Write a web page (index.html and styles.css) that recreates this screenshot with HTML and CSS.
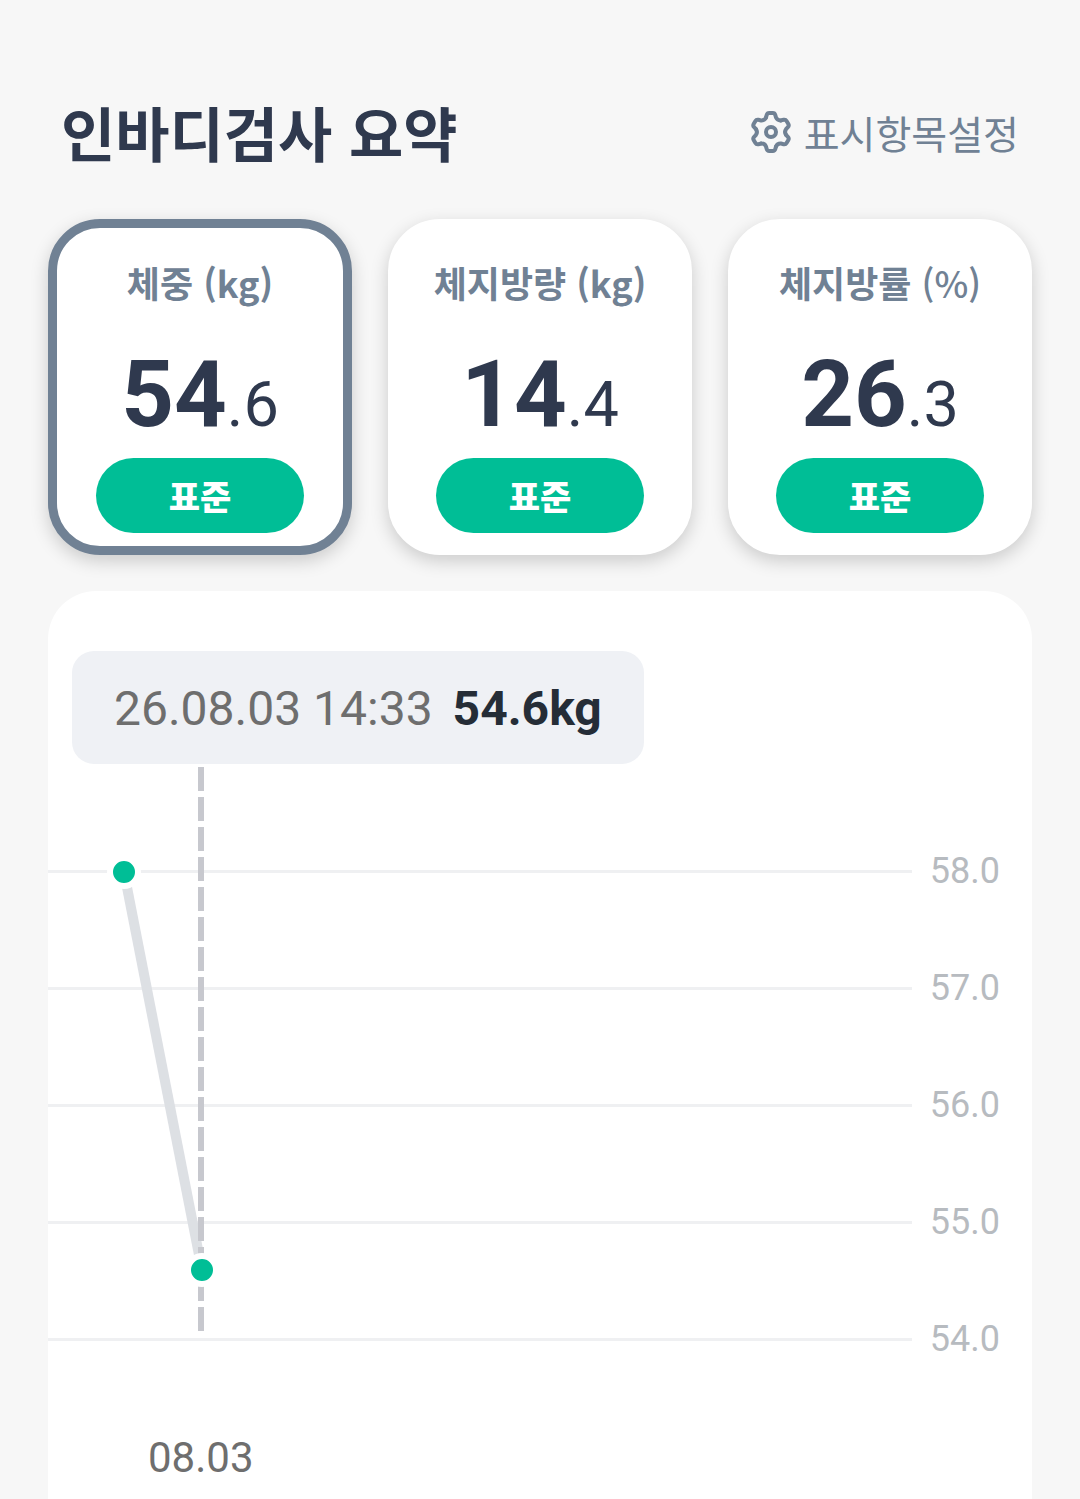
FILE: index.html
```html
<!DOCTYPE html>
<html lang="ko">
<head>
  <meta charset="UTF-8">
  <meta name="viewport" content="width=device-width, initial-scale=1">
  <title>인바디검사 요약</title>
  <link rel="stylesheet" href="styles.css">
</head>
<body>

  <main class="page">
    <header class="header">
      <h1>인바디검사 요약</h1>
      <button class="settings" type="button">
        <svg class="gear" viewBox="-22 -22 44 44" aria-hidden="true">
          <defs>
            <path id="tooth" d="M-5 -14.5L-4.3 -17Q-3.7 -19 -1.8 -19H1.8Q3.7 -19 4.3 -17L5 -14.5Q6.5 -11.26 10.06 -11.58"/>
          </defs>
          <use href="#tooth"/>
          <use href="#tooth" transform="rotate(60)"/>
          <use href="#tooth" transform="rotate(120)"/>
          <use href="#tooth" transform="rotate(180)"/>
          <use href="#tooth" transform="rotate(240)"/>
          <use href="#tooth" transform="rotate(300)"/>
          <circle r="5"/>
        </svg>
        표시항목설정
      </button>
    </header>

    <div class="cards">
      <button class="card selected" type="button" aria-pressed="true">
        <span class="label">체중 (kg)</span>
        <span class="value"><strong>54</strong>.6</span>
        <span class="status">표준</span>
      </button>
      <button class="card" type="button" aria-pressed="false">
        <span class="label">체지방량 (kg)</span>
        <span class="value"><strong>14</strong>.4</span>
        <span class="status">표준</span>
      </button>
      <button class="card" type="button" aria-pressed="false">
        <span class="label">체지방률 <span class="percent">(%)</span></span>
        <span class="value"><strong>26</strong>.3</span>
        <span class="status">표준</span>
      </button>
    </div>

    <section class="chart">
      <p class="reading"><span>26.08.03 14:33</span><strong>54.6kg</strong></p>

      <div class="plot">
        <ul class="scale">
          <li>58.0</li>
          <li>57.0</li>
          <li>56.0</li>
          <li>55.0</li>
          <li>54.0</li>
        </ul>
        <!-- weight line and marker of the selected day -->
        <svg class="series" width="240" height="600" aria-hidden="true">
          <path class="trend" d="M76 108L154 506"/>
          <path class="marker" d="M153 3V567"/>
          <circle class="dot" cx="76" cy="108" r="14"/>
          <circle class="dot" cx="154" cy="506" r="14"/>
        </svg>
      </div>

      <time class="date">08.03</time>
    </section>
  </main>

</body>
</html>
```

FILE: styles.css
```css
:root {
  --bg: #f7f7f7;
  --navy: #2f394e;
  --slate: #708194;
  --green: #00be96;
  --grey: #6e6e6e;
}

* {
  box-sizing: border-box;
}

body {
  margin: 0;
  background: var(--bg);
  color: var(--navy);
  font-family: Roboto, 'Noto Sans CJK KR', sans-serif;
}

button {
  border: 0;
  padding: 0;
  background: none;
  color: inherit;
  font: inherit;
  cursor: pointer;
}

.page {
  display: flex;
  flex-direction: column;
  min-height: 100vh;
  padding: 0 48px;
}

.header {
  display: flex;
  justify-content: space-between;
  align-items: center;
  padding: 96px 13px 51px;
}

h1 {
  margin: 0;
  font: 700 59px/72px 'Noto Sans CJK KR', sans-serif;
}

.settings {
  display: flex;
  align-items: center;
  gap: 11px;
  color: var(--slate);
  font: 400 39px/48px 'Noto Sans CJK KR', sans-serif;
}

.gear {
  width: 44px;
  height: 44px;
  fill: none;
  stroke: var(--slate);
  stroke-width: 4;
  stroke-linecap: round;
}

/* Summary cards */
.cards {
  display: flex;
  gap: 36px;
  margin-bottom: 36px;
}

.card {
  flex: 1;
  display: flex;
  flex-direction: column;
  align-items: center;
  padding: 30px 0 13px;
  border: 9px solid #fff;
  border-radius: 52px;
  background: #fff;
  box-shadow: 0 6px 18px rgba(0, 0, 0, 0.18);
}

.selected {
  border-color: var(--slate);
}

.label {
  color: var(--slate);
  font: 700 36px/48px 'Noto Sans CJK KR', sans-serif;
}

.percent {
  font-weight: 500;
}

.value {
  margin: 35px 0 9px;
  font-size: 63px;
  line-height: 1;
}

.value strong {
  font-size: 92px;
  font-weight: 700;
  line-height: 108px;
}

.status {
  width: 208px;
  border-radius: 38px;
  background: var(--green);
  color: #fff;
  font: 900 34px/75px 'Noto Sans CJK KR', sans-serif;
}

/* Chart */
.chart {
  flex: 1;
  padding: 60px 0 18px;
  border-radius: 48px 48px 0 0;
  background: #fff;
}

.reading {
  display: flex;
  gap: 20px;
  width: fit-content;
  margin: 0 24px;
  padding: 3px 42px 0;
  border-radius: 22px;
  background: #eff1f5;
  color: var(--grey);
  font-size: 48px;
  line-height: 110px;
}

.reading strong {
  color: #252d37;
  font-weight: 700;
}

.plot {
  position: relative;
  padding-top: 49px;
}

.scale {
  margin: 0;
  padding: 0 32px 0 0;
  list-style: none;
  color: #b7bbc0;
  font-size: 36px;
  line-height: 117px;
}

.scale li {
  display: flex;
  align-items: center;
  gap: 18px;
}

.scale li::before {
  content: '';
  flex: 1;
  height: 3px;
  background: #eff0f2;
}

.series {
  position: absolute;
  top: 0;
  left: 0;
}

.trend {
  stroke: #dde0e4;
  stroke-width: 10;
}

.marker {
  stroke: #c7c8ce;
  stroke-width: 6;
  stroke-dasharray: 24 6;
}

.dot {
  fill: var(--green);
  stroke: #fff;
  stroke-width: 6;
}

.date {
  display: block;
  margin-top: 36px;
  padding-left: 100px;
  color: var(--grey);
  font-size: 42px;
  line-height: 48px;
}
```
